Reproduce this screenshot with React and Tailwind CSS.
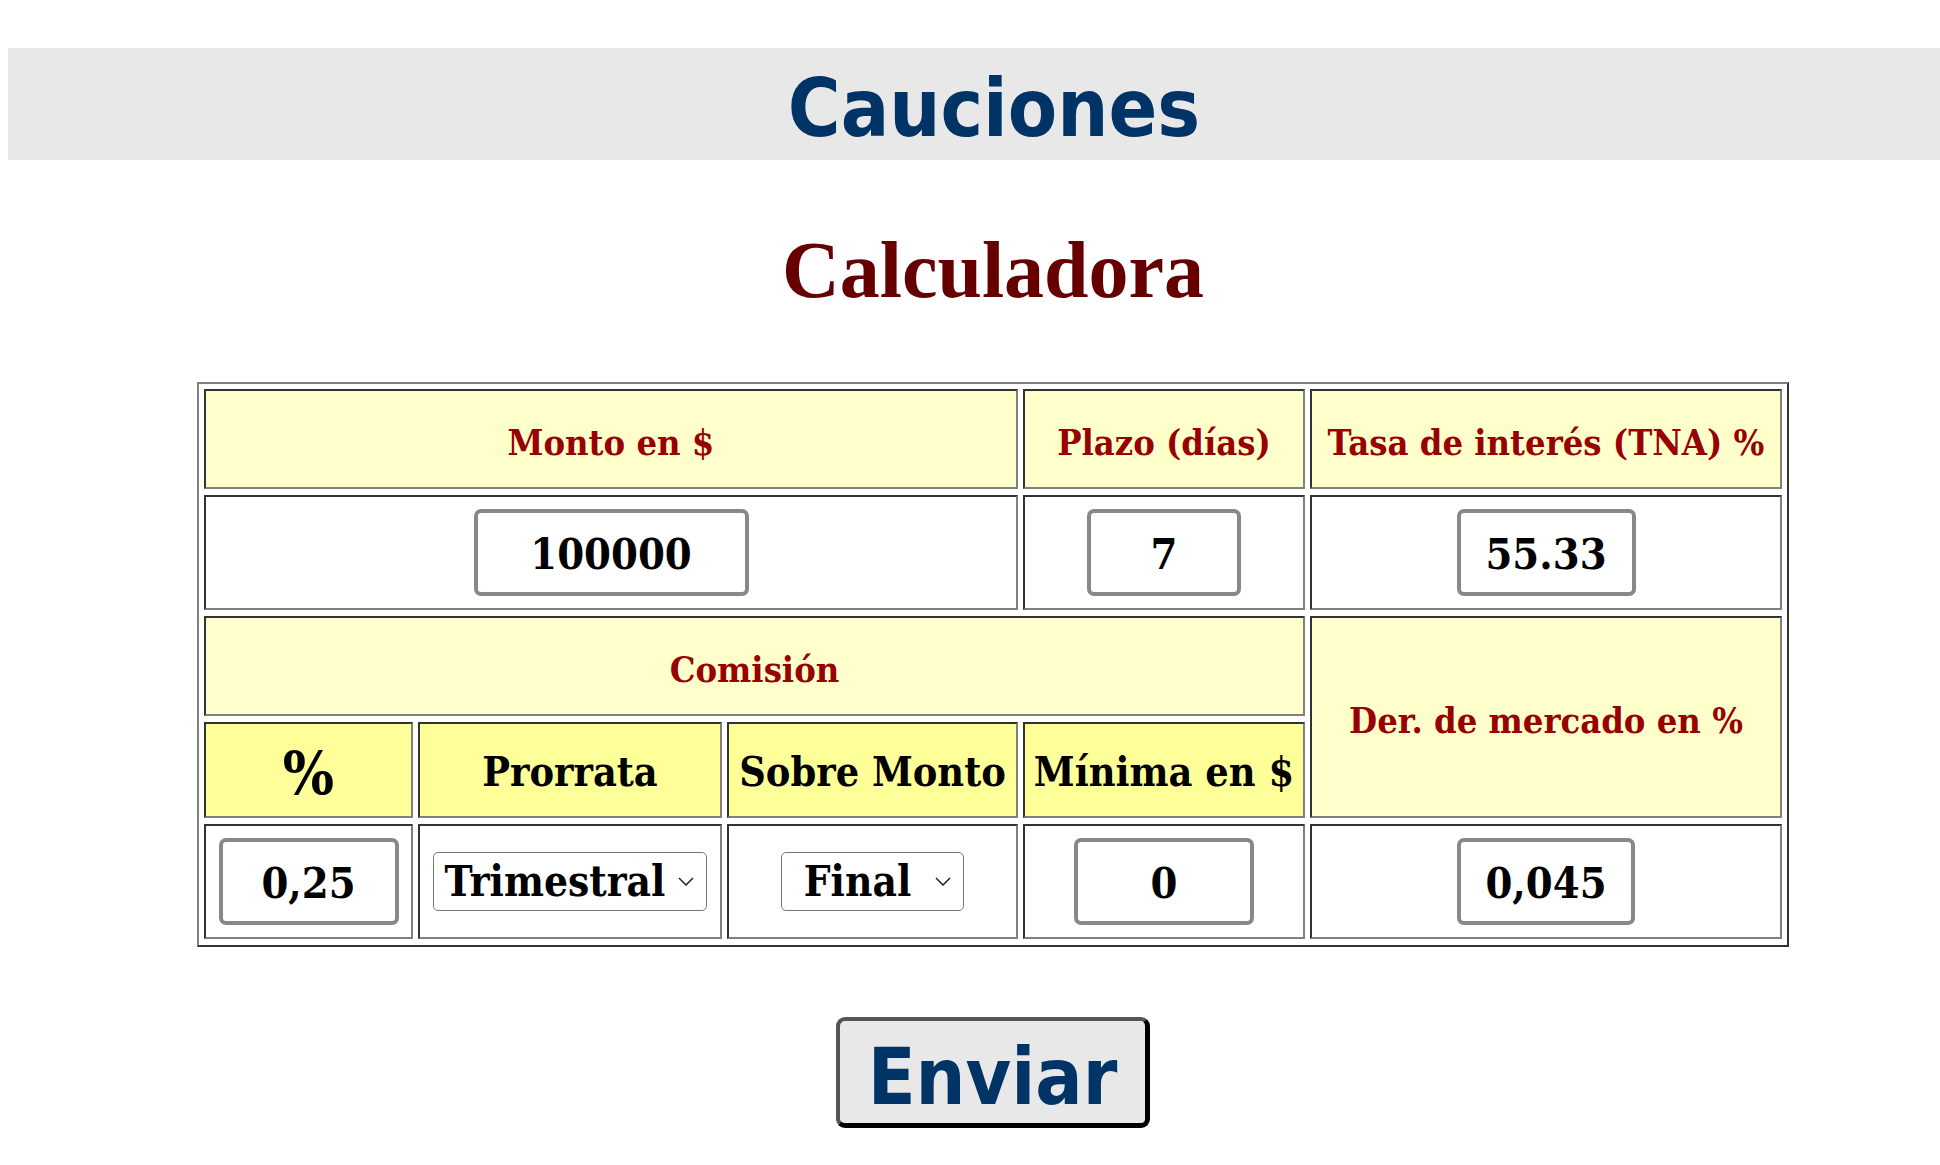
import { useState } from 'react';

// fuentes: títulos tipo Tahoma, celdas en serif negrita
const sansTitle = "font-['DejaVu_Sans_Condensed','DejaVu_Sans',sans-serif] font-stretch-condensed font-bold";
const serifBold = "font-['DejaVu_Serif_Condensed','DejaVu_Serif',serif] font-stretch-condensed font-bold";

function Cell({ className = '', children }) {
  return (
    <div
      className={`flex items-center justify-center border-2 border-t-[#333333] border-l-[#333333] border-b-[#808080] border-r-[#808080] ${className}`}
    >
      {children}
    </div>
  );
}

function NumberBox({ width, value }) {
  const [val, setVal] = useState(value);
  return (
    <input
      className={`${width} h-[87px] rounded-[7px] border-4 border-[#888888] bg-white pt-[2px] text-center text-[43px] text-black outline-none ${serifBold}`}
      value={val}
      onChange={(e) => setVal(e.target.value)}
    />
  );
}

function SelectBox({ width, value }) {
  return (
    <div className={`${width} flex h-[59px] items-center rounded-[5px] border border-[#767676] bg-white`}>
      <span className={`flex-1 text-center text-[42px] leading-none text-black ${serifBold}`}>{value}</span>
      <svg className="mr-[12px] ml-[2px] h-[9px] w-[16px]" viewBox="0 0 16 9">
        <path d="M1 1l7 7 7-7" stroke="#222222" strokeWidth="1.5" fill="none" />
      </svg>
    </div>
  );
}

export default function App() {
  return (
    <div className="min-h-screen bg-white">
      {/* Encabezado */}
      <div className="pt-[48px]">
        <div className="ml-2 flex h-[112px] items-center justify-center bg-[#e8e8e8] pl-10 pt-[10px]">
          <h1 className={`text-[80px] leading-none text-[#003366] ${sansTitle}`}>Cauciones</h1>
        </div>
      </div>

      <div className="pl-[46px]">
        <h2 className="mt-[70px] text-center font-['Liberation_Serif',serif] text-[80px] font-bold leading-none text-[#660000]">
          Calculadora
        </h2>

        {/* Tabla de la calculadora */}
        <div className="mt-[72px] flex justify-center">
          <div className="border-2 border-t-[#808080] border-l-[#808080] border-b-[#333333] border-r-[#333333] p-[5px] pb-[6px]">
            <div className="grid grid-cols-[209px_304px_291px_282px_472px] grid-rows-[100px_115px_100px_96px_115px] gap-x-[5px] gap-y-[6px]">
              <Cell className="col-span-3 bg-[#ffffcc]">
                <span className={`pt-[5px] text-[36px] text-[#990000] ${serifBold}`}>Monto en $</span>
              </Cell>
              <Cell className="bg-[#ffffcc]">
                <span className={`pt-[5px] text-[36px] text-[#990000] ${serifBold}`}>Plazo (días)</span>
              </Cell>
              <Cell className="bg-[#ffffcc]">
                <span className={`whitespace-nowrap pt-[5px] text-[36px] text-[#990000] ${serifBold}`}>Tasa de interés (TNA) %</span>
              </Cell>

              <Cell className="col-span-3 bg-white">
                <NumberBox width="w-[275px]" value="100000" />
              </Cell>
              <Cell className="bg-white">
                <NumberBox width="w-[154px]" value="7" />
              </Cell>
              <Cell className="bg-white">
                <NumberBox width="w-[179px]" value="55.33" />
              </Cell>

              <Cell className="col-span-4 bg-[#ffffcc]">
                <span className={`pt-[5px] text-[36px] text-[#990000] ${serifBold}`}>Comisión</span>
              </Cell>
              <Cell className="row-span-2 bg-[#ffffcc]">
                <span className={`whitespace-nowrap pt-[5px] text-[36px] text-[#990000] ${serifBold}`}>Der. de mercado en %</span>
              </Cell>

              <Cell className="bg-[#ffff99]">
                <span className={`pt-[6px] text-[60px] leading-none text-black ${serifBold}`}>%</span>
              </Cell>
              <Cell className="bg-[#ffff99]">
                <span className={`pt-[5px] text-[41px] text-black ${serifBold}`}>Prorrata</span>
              </Cell>
              <Cell className="bg-[#ffff99]">
                <span className={`whitespace-nowrap pt-[5px] text-[41px] text-black ${serifBold}`}>Sobre Monto</span>
              </Cell>
              <Cell className="bg-[#ffff99]">
                <span className={`whitespace-nowrap pt-[5px] text-[41px] text-black ${serifBold}`}>Mínima en $</span>
              </Cell>

              <Cell className="bg-white">
                <NumberBox width="w-[180px]" value="0,25" />
              </Cell>
              <Cell className="bg-white">
                <SelectBox width="w-[274px]" value="Trimestral" />
              </Cell>
              <Cell className="bg-white">
                <SelectBox width="w-[183px]" value="Final" />
              </Cell>
              <Cell className="bg-white">
                <NumberBox width="w-[180px]" value="0" />
              </Cell>
              <Cell className="bg-white">
                <NumberBox width="w-[178px]" value="0,045" />
              </Cell>
            </div>
          </div>
        </div>

        <div className="mt-[70px] flex justify-center pb-10">
          <button
            className={`flex h-[111px] w-[314px] items-center justify-center rounded-[9px] border-4 border-t-[#555555] border-l-[#555555] border-b-[5px] border-r-[5px] border-b-black border-r-black bg-[#e8e8e8] pt-[9px] text-[78px] leading-none text-[#003366] ${sansTitle}`}
          >
            Enviar
          </button>
        </div>
      </div>
    </div>
  );
}
